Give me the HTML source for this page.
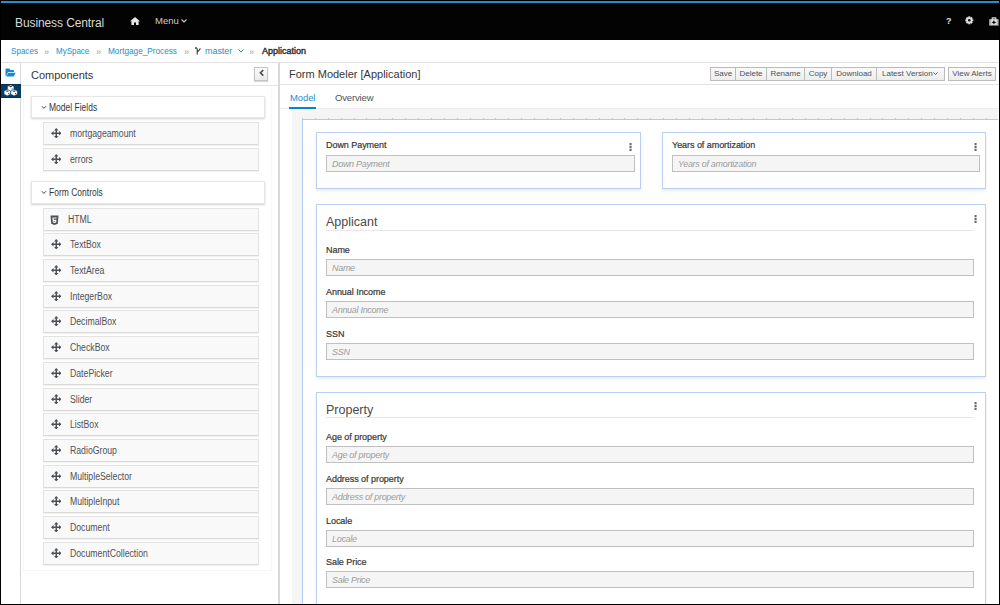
<!DOCTYPE html>
<html><head><meta charset="utf-8">
<style>
*{box-sizing:border-box;margin:0;padding:0}
html,body{width:1000px;height:605px;overflow:hidden;background:#fff}
body{position:relative;font-family:"Liberation Sans",sans-serif;color:#363636}
.a{position:absolute}
.sx{transform-origin:0 50%}
.t{position:absolute;white-space:nowrap;line-height:1}
#frame{position:absolute;left:0;top:0;width:1000px;height:605px;border:1px solid #000;z-index:100;pointer-events:none}
#nav{left:0;top:0;width:1000px;height:40px;background:#030303}
#navline{left:1px;top:1px;width:998px;height:2px;background:#2290cf}
#bc{left:0;top:40px;width:1000px;height:23px;background:#fff;border-bottom:1px solid #e2e2e2}
.lnk{color:#1f8dcd}
.raq{color:#a0a0a0;font-size:9px}
#side{left:1px;top:63px;width:20px;height:542px;border-right:1px solid #d6d6d6;background:#fff}
#divider{left:278px;top:63px;width:2px;height:542px;background:#d9d9d9}
.hdrline{height:1px;background:#e3e3e3}
.grp{background:#fff;border:1px solid #e6e6e6;box-shadow:0 1px 2px rgba(0,0,0,.18)}
.item{left:43px;width:216px;height:23px;background:#f9f9f9;border:1px solid #e3e3e3;border-bottom-color:#d9d9d9;box-shadow:0 1px 1px rgba(0,0,0,.05)}
.item .ic{position:absolute;left:7px;top:5px}
.item .lb{position:absolute;left:26px;top:6px;font-size:10px;color:#4d5258;white-space:nowrap;line-height:1;transform:scaleX(0.87);transform-origin:0 50%}
.btn{top:67px;height:14px;border:1px solid #bbb;background:linear-gradient(#fafafa,#ededed);font-size:8px;color:#4d5258;line-height:12px;text-align:center;white-space:nowrap}
.card{background:#fff;border:1px solid #b9d0f4;box-shadow:0 2px 3px rgba(0,0,0,.08)}
.flab{font-size:9px;font-weight:normal;color:#363636;-webkit-text-stroke:0.2px #363636;letter-spacing:-0.05px}
.inp{height:17px;background:#f5f5f5;border:1px solid #c0c0c0}
.ph{position:absolute;left:5px;top:4px;font-size:9px;font-style:italic;color:#9c9c9c;white-space:nowrap;line-height:1;letter-spacing:-0.3px}
.kebab{width:3px;height:8px}
.legend{font-size:12.5px;color:#4a4a4a}
.lline{height:1px;background:#e6e6e6}
</style></head><body>

<!-- NAVBAR -->
<div id="nav" class="a"></div>
<div id="navline" class="a"></div>
<div class="t" style="left:15px;top:17px;font-size:12px;color:#d8d8d8;letter-spacing:-0.1px">Business Central</div>
<svg class="a" style="left:130px;top:17px" width="10" height="8" viewBox="0 0 10 8"><path d="M5 0 L10 4.3 L8.6 4.3 L8.6 8 L6 8 L6 5.5 L4 5.5 L4 8 L1.4 8 L1.4 4.3 L0 4.3 Z" fill="#e6e6e6"/></svg>
<div class="t" style="left:155px;top:16px;font-size:9.5px;color:#cccccc">Menu</div>
<svg class="a" style="left:181px;top:19px" width="6" height="4" viewBox="0 0 6 4"><path d="M0.5 0.5 L3 3 L5.5 0.5" stroke="#c8c8c8" stroke-width="1.1" fill="none"/></svg>
<div class="t" style="left:946px;top:17px;font-size:9px;font-weight:bold;color:#e0e0e0">?</div>
<svg class="a" style="left:965.3px;top:16.3px" width="8.6" height="8.6" viewBox="0 0 9 9"><g fill="#dedede"><circle cx="4.5" cy="4.5" r="3.25"/><rect x="3.5" y="0.3" width="2" height="8.4" transform="rotate(0 4.5 4.5)"/><rect x="3.5" y="0.3" width="2" height="8.4" transform="rotate(45 4.5 4.5)"/><rect x="3.5" y="0.3" width="2" height="8.4" transform="rotate(90 4.5 4.5)"/><rect x="3.5" y="0.3" width="2" height="8.4" transform="rotate(135 4.5 4.5)"/></g><circle cx="4.5" cy="4.5" r="1.25" fill="#030303"/></svg>
<svg class="a" style="left:988.5px;top:16.6px" width="11" height="9" viewBox="0 0 11 9"><path d="M2.6 2.2 L2.6 0.6 Q2.6 0.2 3 0.2 L7 0.2 Q7.4 0.2 7.4 0.6 L7.4 2.2 L9.5 2.2 L9.5 8.5 L0.3 8.5 L0.3 2.2 Z" fill="#d8d8d8"/><rect x="3.8" y="1.1" width="2.4" height="1.1" fill="#7a7a7a"/><rect x="1.3" y="2.2" width="0.6" height="6.3" fill="#9a9a9a"/><rect x="8" y="2.2" width="0.6" height="6.3" fill="#9a9a9a"/><path d="M4.9 3.3 L5.7 4.8 L7.4 5.4 L5.7 6 L4.9 7.5 L4.1 6 L2.4 5.4 L4.1 4.8 Z" fill="#030303"/></svg>

<!-- BREADCRUMB -->
<div id="bc" class="a"></div>
<div class="t lnk sx" style="left:11px;top:46px;font-size:9.5px;transform:scaleX(0.85)">Spaces</div>
<div class="t raq" style="left:44px;top:47.5px">&raquo;</div>
<div class="t lnk sx" style="left:56px;top:46px;font-size:9.5px;transform:scaleX(0.84)">MySpace</div>
<div class="t raq" style="left:96px;top:47.5px">&raquo;</div>
<div class="t lnk sx" style="left:108px;top:46px;font-size:9.5px;transform:scaleX(0.865)">Mortgage_Process</div>
<div class="t raq" style="left:184px;top:47.5px">&raquo;</div>
<svg class="a" style="left:195px;top:47px" width="7" height="8" viewBox="0 0 7 8"><path d="M2.2 1.2 L2.2 7.6 M2.2 5.6 C2.2 3.6 5.2 3.8 5.2 1.2" stroke="#3a3a3a" stroke-width="1.1" fill="none"/><circle cx="1" cy="1" r="0.9" fill="#3a3a3a"/></svg>
<div class="t lnk sx" style="left:205px;top:46px;font-size:9.5px;transform:scaleX(0.94)">master</div>
<svg class="a" style="left:238px;top:49px" width="6" height="4" viewBox="0 0 6 4"><path d="M0.5 0.5 L3 3 L5.5 0.5" stroke="#1f8dcd" stroke-width="1" fill="none"/></svg>
<div class="t raq" style="left:249px;top:47.5px">&raquo;</div>
<div class="t sx" style="left:262px;top:46px;font-size:9.5px;color:#2a2a2a;-webkit-text-stroke:0.4px #2a2a2a;transform:scaleX(0.945)">Application</div>

<!-- SIDEBAR -->
<div id="side" class="a"></div>
<svg class="a" style="left:5px;top:68px" width="11" height="9" viewBox="0 0 11 9"><path d="M0.5 1.2 Q0.5 0.6 1.1 0.6 L4.4 0.6 L5.4 1.9 L8.3 1.9 Q8.9 1.9 8.9 2.5 L8.9 4.1 L3.1 4.1 L1.1 7.9 L0.5 7.9 Z" fill="#1589d2"/><path d="M3.4 4.8 L10.7 4.8 L8.6 8.4 L1.2 8.4 Z" fill="#1589d2"/></svg>
<div class="a" style="left:1px;top:84px;width:20px;height:14px;background:#083d63;border-top:1px solid #05304e;border-bottom:1px solid #05304e"></div>
<svg class="a" style="left:4.3px;top:85.2px" width="13.5" height="11" viewBox="0 0 13.5 11"><g transform="translate(3.4 0)"><path d="M0.1 1.5 L3.3 0 L6.5 1.5 L6.5 4.7 L3.3 6.2 L0.1 4.7 Z" fill="#fff" stroke="#083d63" stroke-width="0.45"/><ellipse cx="3.3" cy="1.6" rx="1.5" ry="0.55" fill="#083d63"/><rect x="4.2" y="3.5" width="1.1" height="1" fill="#083d63"/></g><g transform="translate(0 4.5)"><path d="M0.1 1.5 L3.3 0 L6.5 1.5 L6.5 4.7 L3.3 6.2 L0.1 4.7 Z" fill="#fff" stroke="#083d63" stroke-width="0.45"/><ellipse cx="3.3" cy="1.6" rx="1.5" ry="0.55" fill="#083d63"/><rect x="4.2" y="3.5" width="1.1" height="1" fill="#083d63"/></g><g transform="translate(6.8 4.5)"><path d="M0.1 1.5 L3.3 0 L6.5 1.5 L6.5 4.7 L3.3 6.2 L0.1 4.7 Z" fill="#fff" stroke="#083d63" stroke-width="0.45"/><ellipse cx="3.3" cy="1.6" rx="1.5" ry="0.55" fill="#083d63"/><rect x="4.2" y="3.5" width="1.1" height="1" fill="#083d63"/></g></svg>

<!-- COMPONENTS PANEL -->
<div class="t" style="left:31px;top:70px;font-size:11px;color:#363636">Components</div>
<div class="a" style="left:254px;top:67px;width:14px;height:14px;border:1px solid #c4c4c4;background:linear-gradient(#fafafa,#ececec);box-shadow:0 1px 1px rgba(0,0,0,.15)"></div>
<svg class="a" style="left:259px;top:69px" width="6" height="8" viewBox="0 0 6 8"><path d="M4.3 1 L1.4 3.8 L4.3 6.6" stroke="#42464b" stroke-width="1.5" fill="none"/></svg>
<div class="a hdrline" style="left:21px;top:85px;width:257px"></div>
<div id="divider" class="a"></div>

<!-- faint container -->
<div class="a" style="left:23px;top:89px;width:249px;height:482px;border:1px solid #f7f7f7;border-top:none"></div>

<div class="a grp" style="left:31px;top:96px;width:234px;height:22px"></div>
<svg class="a" style="left:41px;top:105px" width="6" height="5" viewBox="0 0 6 5"><path d="M0.8 1.2 L2.9 3.4 L5 1.2" stroke="#4a4a4a" stroke-width="1" fill="none"/></svg>
<div class="t sx" style="left:49px;top:103px;font-size:10px;color:#363636;transform:scaleX(0.85)">Model Fields</div>

<div class="a item" style="top:122px"><svg class="ic" style="left:6.7px;top:4.6px" width="10.5" height="10.5" viewBox="0 0 10 10"><g fill="#4a4f55"><path d="M5 0 L7.1 2.4 L2.9 2.4 Z M5 10 L7.1 7.6 L2.9 7.6 Z M0 5 L2.4 2.9 L2.4 7.1 Z M10 5 L7.6 2.9 L7.6 7.1 Z"/><rect x="4.3" y="2" width="1.4" height="6"/><rect x="2" y="4.3" width="6" height="1.4"/></g></svg><span class="lb">mortgageamount</span></div>
<div class="a item" style="top:148px"><svg class="ic" style="left:6.7px;top:4.6px" width="10.5" height="10.5" viewBox="0 0 10 10"><g fill="#4a4f55"><path d="M5 0 L7.1 2.4 L2.9 2.4 Z M5 10 L7.1 7.6 L2.9 7.6 Z M0 5 L2.4 2.9 L2.4 7.1 Z M10 5 L7.6 2.9 L7.6 7.1 Z"/><rect x="4.3" y="2" width="1.4" height="6"/><rect x="2" y="4.3" width="6" height="1.4"/></g></svg><span class="lb">errors</span></div>

<div class="a grp" style="left:31px;top:181px;width:234px;height:23px"></div>
<svg class="a" style="left:41px;top:190px" width="6" height="5" viewBox="0 0 6 5"><path d="M0.8 1.2 L2.9 3.4 L5 1.2" stroke="#4a4a4a" stroke-width="1" fill="none"/></svg>
<div class="t sx" style="left:49px;top:188px;font-size:10px;color:#363636;transform:scaleX(0.85)">Form Controls</div>

<div class="a item" style="top:208px"><svg class="ic" style="left:5.3px;top:6px" width="11" height="11" viewBox="0 0 11 11"><path d="M1.5 0.5 L9.5 0.5 L8.8 8.8 L5.5 10 L2.2 8.8 Z" fill="#4d5258"/><path d="M3.4 2.4 L7.6 2.4 L7.5 3.5 L4.6 3.5 L4.7 4.8 L7.4 4.8 L7.2 7.4 L5.5 8 L3.8 7.4 L3.7 6.2 L4.8 6.2 L4.9 6.6 L5.5 6.8 L6.1 6.6 L6.2 5.9 L3.6 5.9 Z" fill="#f8f8f8"/></svg><span class="lb" style="left:24px">HTML</span></div>
<div class="a item" style="top:233px"><svg class="ic" style="left:6.7px;top:4.6px" width="10.5" height="10.5" viewBox="0 0 10 10"><g fill="#4a4f55"><path d="M5 0 L7.1 2.4 L2.9 2.4 Z M5 10 L7.1 7.6 L2.9 7.6 Z M0 5 L2.4 2.9 L2.4 7.1 Z M10 5 L7.6 2.9 L7.6 7.1 Z"/><rect x="4.3" y="2" width="1.4" height="6"/><rect x="2" y="4.3" width="6" height="1.4"/></g></svg><span class="lb">TextBox</span></div>
<div class="a item" style="top:259px"><svg class="ic" style="left:6.7px;top:4.6px" width="10.5" height="10.5" viewBox="0 0 10 10"><g fill="#4a4f55"><path d="M5 0 L7.1 2.4 L2.9 2.4 Z M5 10 L7.1 7.6 L2.9 7.6 Z M0 5 L2.4 2.9 L2.4 7.1 Z M10 5 L7.6 2.9 L7.6 7.1 Z"/><rect x="4.3" y="2" width="1.4" height="6"/><rect x="2" y="4.3" width="6" height="1.4"/></g></svg><span class="lb">TextArea</span></div>
<div class="a item" style="top:285px"><svg class="ic" style="left:6.7px;top:4.6px" width="10.5" height="10.5" viewBox="0 0 10 10"><g fill="#4a4f55"><path d="M5 0 L7.1 2.4 L2.9 2.4 Z M5 10 L7.1 7.6 L2.9 7.6 Z M0 5 L2.4 2.9 L2.4 7.1 Z M10 5 L7.6 2.9 L7.6 7.1 Z"/><rect x="4.3" y="2" width="1.4" height="6"/><rect x="2" y="4.3" width="6" height="1.4"/></g></svg><span class="lb">IntegerBox</span></div>
<div class="a item" style="top:310px"><svg class="ic" style="left:6.7px;top:4.6px" width="10.5" height="10.5" viewBox="0 0 10 10"><g fill="#4a4f55"><path d="M5 0 L7.1 2.4 L2.9 2.4 Z M5 10 L7.1 7.6 L2.9 7.6 Z M0 5 L2.4 2.9 L2.4 7.1 Z M10 5 L7.6 2.9 L7.6 7.1 Z"/><rect x="4.3" y="2" width="1.4" height="6"/><rect x="2" y="4.3" width="6" height="1.4"/></g></svg><span class="lb">DecimalBox</span></div>
<div class="a item" style="top:336px"><svg class="ic" style="left:6.7px;top:4.6px" width="10.5" height="10.5" viewBox="0 0 10 10"><g fill="#4a4f55"><path d="M5 0 L7.1 2.4 L2.9 2.4 Z M5 10 L7.1 7.6 L2.9 7.6 Z M0 5 L2.4 2.9 L2.4 7.1 Z M10 5 L7.6 2.9 L7.6 7.1 Z"/><rect x="4.3" y="2" width="1.4" height="6"/><rect x="2" y="4.3" width="6" height="1.4"/></g></svg><span class="lb">CheckBox</span></div>
<div class="a item" style="top:362px"><svg class="ic" style="left:6.7px;top:4.6px" width="10.5" height="10.5" viewBox="0 0 10 10"><g fill="#4a4f55"><path d="M5 0 L7.1 2.4 L2.9 2.4 Z M5 10 L7.1 7.6 L2.9 7.6 Z M0 5 L2.4 2.9 L2.4 7.1 Z M10 5 L7.6 2.9 L7.6 7.1 Z"/><rect x="4.3" y="2" width="1.4" height="6"/><rect x="2" y="4.3" width="6" height="1.4"/></g></svg><span class="lb">DatePicker</span></div>
<div class="a item" style="top:388px"><svg class="ic" style="left:6.7px;top:4.6px" width="10.5" height="10.5" viewBox="0 0 10 10"><g fill="#4a4f55"><path d="M5 0 L7.1 2.4 L2.9 2.4 Z M5 10 L7.1 7.6 L2.9 7.6 Z M0 5 L2.4 2.9 L2.4 7.1 Z M10 5 L7.6 2.9 L7.6 7.1 Z"/><rect x="4.3" y="2" width="1.4" height="6"/><rect x="2" y="4.3" width="6" height="1.4"/></g></svg><span class="lb">Slider</span></div>
<div class="a item" style="top:413px"><svg class="ic" style="left:6.7px;top:4.6px" width="10.5" height="10.5" viewBox="0 0 10 10"><g fill="#4a4f55"><path d="M5 0 L7.1 2.4 L2.9 2.4 Z M5 10 L7.1 7.6 L2.9 7.6 Z M0 5 L2.4 2.9 L2.4 7.1 Z M10 5 L7.6 2.9 L7.6 7.1 Z"/><rect x="4.3" y="2" width="1.4" height="6"/><rect x="2" y="4.3" width="6" height="1.4"/></g></svg><span class="lb">ListBox</span></div>
<div class="a item" style="top:439px"><svg class="ic" style="left:6.7px;top:4.6px" width="10.5" height="10.5" viewBox="0 0 10 10"><g fill="#4a4f55"><path d="M5 0 L7.1 2.4 L2.9 2.4 Z M5 10 L7.1 7.6 L2.9 7.6 Z M0 5 L2.4 2.9 L2.4 7.1 Z M10 5 L7.6 2.9 L7.6 7.1 Z"/><rect x="4.3" y="2" width="1.4" height="6"/><rect x="2" y="4.3" width="6" height="1.4"/></g></svg><span class="lb">RadioGroup</span></div>
<div class="a item" style="top:465px"><svg class="ic" style="left:6.7px;top:4.6px" width="10.5" height="10.5" viewBox="0 0 10 10"><g fill="#4a4f55"><path d="M5 0 L7.1 2.4 L2.9 2.4 Z M5 10 L7.1 7.6 L2.9 7.6 Z M0 5 L2.4 2.9 L2.4 7.1 Z M10 5 L7.6 2.9 L7.6 7.1 Z"/><rect x="4.3" y="2" width="1.4" height="6"/><rect x="2" y="4.3" width="6" height="1.4"/></g></svg><span class="lb">MultipleSelector</span></div>
<div class="a item" style="top:490px"><svg class="ic" style="left:6.7px;top:4.6px" width="10.5" height="10.5" viewBox="0 0 10 10"><g fill="#4a4f55"><path d="M5 0 L7.1 2.4 L2.9 2.4 Z M5 10 L7.1 7.6 L2.9 7.6 Z M0 5 L2.4 2.9 L2.4 7.1 Z M10 5 L7.6 2.9 L7.6 7.1 Z"/><rect x="4.3" y="2" width="1.4" height="6"/><rect x="2" y="4.3" width="6" height="1.4"/></g></svg><span class="lb">MultipleInput</span></div>
<div class="a item" style="top:516px"><svg class="ic" style="left:6.7px;top:4.6px" width="10.5" height="10.5" viewBox="0 0 10 10"><g fill="#4a4f55"><path d="M5 0 L7.1 2.4 L2.9 2.4 Z M5 10 L7.1 7.6 L2.9 7.6 Z M0 5 L2.4 2.9 L2.4 7.1 Z M10 5 L7.6 2.9 L7.6 7.1 Z"/><rect x="4.3" y="2" width="1.4" height="6"/><rect x="2" y="4.3" width="6" height="1.4"/></g></svg><span class="lb">Document</span></div>
<div class="a item" style="top:542px"><svg class="ic" style="left:6.7px;top:4.6px" width="10.5" height="10.5" viewBox="0 0 10 10"><g fill="#4a4f55"><path d="M5 0 L7.1 2.4 L2.9 2.4 Z M5 10 L7.1 7.6 L2.9 7.6 Z M0 5 L2.4 2.9 L2.4 7.1 Z M10 5 L7.6 2.9 L7.6 7.1 Z"/><rect x="4.3" y="2" width="1.4" height="6"/><rect x="2" y="4.3" width="6" height="1.4"/></g></svg><span class="lb">DocumentCollection</span></div>


<!-- FORM MODELER HEADER -->
<div class="t" style="left:289px;top:69px;font-size:11px;color:#363636">Form Modeler [Application]</div>
<div class="a btn" style="left:710px;width:26px">Save</div>
<div class="a btn" style="left:735px;width:32px">Delete</div>
<div class="a btn" style="left:766px;width:39px">Rename</div>
<div class="a btn" style="left:804px;width:28px">Copy</div>
<div class="a btn" style="left:831px;width:46px">Download</div>
<div class="a btn" style="left:876px;width:69px;text-align:left;padding-left:5px">Latest Version</div><svg class="a" style="left:933px;top:72px" width="5" height="3" viewBox="0 0 5 3"><path d="M0.4 0.4 L2.5 2.5 L4.6 0.4" stroke="#4d5258" stroke-width="0.9" fill="none"/></svg>
<div class="a btn" style="left:948px;width:48px">View Alerts</div>
<div class="a hdrline" style="left:280px;top:84px;width:719px"></div>

<!-- TABS -->
<div class="t" style="left:290px;top:93px;font-size:9.5px;color:#1f8dcd;letter-spacing:-0.1px">Model</div>
<div class="t" style="left:335px;top:93px;font-size:9.5px;color:#4d5258;letter-spacing:-0.15px">Overview</div>
<div class="a" style="left:280px;top:108px;width:719px;height:1px;background:#ececec"></div>
<div class="a" style="left:289px;top:107px;width:27px;height:2px;background:#0a84c8"></div>

<!-- CANVAS -->
<div class="a" style="left:292px;top:109px;width:706px;height:496px;background:#f5f5f5"></div>
<div class="a" style="left:302px;top:119px;width:696px;height:486px;background:#fff;border-top:1px solid #b0caf2;border-left:1px solid #b0caf2"></div>
<div class="a" style="left:302px;top:117.5px;width:1px;height:1.5px;background:#c4c4c4"></div><div class="a" style="left:315px;top:117.5px;width:1px;height:1.5px;background:#c4c4c4"></div><div class="a" style="left:328px;top:117.5px;width:1px;height:1.5px;background:#c4c4c4"></div><div class="a" style="left:341px;top:117.5px;width:1px;height:1.5px;background:#c4c4c4"></div><div class="a" style="left:354px;top:117.5px;width:1px;height:1.5px;background:#c4c4c4"></div><div class="a" style="left:366px;top:117.5px;width:1px;height:1.5px;background:#c4c4c4"></div><div class="a" style="left:379px;top:117.5px;width:1px;height:1.5px;background:#c4c4c4"></div><div class="a" style="left:392px;top:117.5px;width:1px;height:1.5px;background:#c4c4c4"></div><div class="a" style="left:405px;top:117.5px;width:1px;height:1.5px;background:#c4c4c4"></div><div class="a" style="left:418px;top:117.5px;width:1px;height:1.5px;background:#c4c4c4"></div><div class="a" style="left:431px;top:117.5px;width:1px;height:1.5px;background:#c4c4c4"></div><div class="a" style="left:444px;top:117.5px;width:1px;height:1.5px;background:#c4c4c4"></div><div class="a" style="left:457px;top:117.5px;width:1px;height:1.5px;background:#c4c4c4"></div><div class="a" style="left:470px;top:117.5px;width:1px;height:1.5px;background:#c4c4c4"></div><div class="a" style="left:483px;top:117.5px;width:1px;height:1.5px;background:#c4c4c4"></div><div class="a" style="left:495px;top:117.5px;width:1px;height:1.5px;background:#c4c4c4"></div><div class="a" style="left:508px;top:117.5px;width:1px;height:1.5px;background:#c4c4c4"></div><div class="a" style="left:521px;top:117.5px;width:1px;height:1.5px;background:#c4c4c4"></div><div class="a" style="left:534px;top:117.5px;width:1px;height:1.5px;background:#c4c4c4"></div><div class="a" style="left:547px;top:117.5px;width:1px;height:1.5px;background:#c4c4c4"></div><div class="a" style="left:560px;top:117.5px;width:1px;height:1.5px;background:#c4c4c4"></div><div class="a" style="left:573px;top:117.5px;width:1px;height:1.5px;background:#c4c4c4"></div><div class="a" style="left:586px;top:117.5px;width:1px;height:1.5px;background:#c4c4c4"></div><div class="a" style="left:599px;top:117.5px;width:1px;height:1.5px;background:#c4c4c4"></div><div class="a" style="left:612px;top:117.5px;width:1px;height:1.5px;background:#c4c4c4"></div><div class="a" style="left:624px;top:117.5px;width:1px;height:1.5px;background:#c4c4c4"></div><div class="a" style="left:637px;top:117.5px;width:1px;height:1.5px;background:#c4c4c4"></div><div class="a" style="left:650px;top:117.5px;width:1px;height:1.5px;background:#c4c4c4"></div><div class="a" style="left:663px;top:117.5px;width:1px;height:1.5px;background:#c4c4c4"></div><div class="a" style="left:676px;top:117.5px;width:1px;height:1.5px;background:#c4c4c4"></div><div class="a" style="left:689px;top:117.5px;width:1px;height:1.5px;background:#c4c4c4"></div><div class="a" style="left:702px;top:117.5px;width:1px;height:1.5px;background:#c4c4c4"></div><div class="a" style="left:715px;top:117.5px;width:1px;height:1.5px;background:#c4c4c4"></div><div class="a" style="left:728px;top:117.5px;width:1px;height:1.5px;background:#c4c4c4"></div><div class="a" style="left:741px;top:117.5px;width:1px;height:1.5px;background:#c4c4c4"></div><div class="a" style="left:753px;top:117.5px;width:1px;height:1.5px;background:#c4c4c4"></div><div class="a" style="left:766px;top:117.5px;width:1px;height:1.5px;background:#c4c4c4"></div><div class="a" style="left:779px;top:117.5px;width:1px;height:1.5px;background:#c4c4c4"></div><div class="a" style="left:792px;top:117.5px;width:1px;height:1.5px;background:#c4c4c4"></div><div class="a" style="left:805px;top:117.5px;width:1px;height:1.5px;background:#c4c4c4"></div><div class="a" style="left:818px;top:117.5px;width:1px;height:1.5px;background:#c4c4c4"></div><div class="a" style="left:831px;top:117.5px;width:1px;height:1.5px;background:#c4c4c4"></div><div class="a" style="left:844px;top:117.5px;width:1px;height:1.5px;background:#c4c4c4"></div><div class="a" style="left:857px;top:117.5px;width:1px;height:1.5px;background:#c4c4c4"></div><div class="a" style="left:870px;top:117.5px;width:1px;height:1.5px;background:#c4c4c4"></div><div class="a" style="left:882px;top:117.5px;width:1px;height:1.5px;background:#c4c4c4"></div><div class="a" style="left:895px;top:117.5px;width:1px;height:1.5px;background:#c4c4c4"></div><div class="a" style="left:908px;top:117.5px;width:1px;height:1.5px;background:#c4c4c4"></div><div class="a" style="left:921px;top:117.5px;width:1px;height:1.5px;background:#c4c4c4"></div><div class="a" style="left:934px;top:117.5px;width:1px;height:1.5px;background:#c4c4c4"></div><div class="a" style="left:947px;top:117.5px;width:1px;height:1.5px;background:#c4c4c4"></div><div class="a" style="left:960px;top:117.5px;width:1px;height:1.5px;background:#c4c4c4"></div><div class="a" style="left:973px;top:117.5px;width:1px;height:1.5px;background:#c4c4c4"></div><div class="a" style="left:986px;top:117.5px;width:1px;height:1.5px;background:#c4c4c4"></div>

<!-- Down Payment card -->
<div class="a card" style="left:316px;top:132px;width:325px;height:57px"></div>
<div class="t flab" style="left:326px;top:141px">Down Payment</div>
<div class="a inp" style="left:326px;top:155px;width:309px"><span class="ph">Down Payment</span></div>

<!-- Years card -->
<div class="a card" style="left:662px;top:132px;width:324px;height:57px"></div>
<div class="t flab" style="left:672px;top:141px">Years of amortization</div>
<div class="a inp" style="left:672px;top:155px;width:308px"><span class="ph">Years of amortization</span></div>

<!-- Applicant card -->
<div class="a card" style="left:316px;top:204px;width:670px;height:173px"></div>
<div class="t legend" style="left:326px;top:216px">Applicant</div>
<div class="a lline" style="left:326px;top:230px;width:648px"></div>
<div class="t flab" style="left:326px;top:246px">Name</div>
<div class="a inp" style="left:326px;top:259px;width:648px"><span class="ph">Name</span></div>
<div class="t flab" style="left:326px;top:288px">Annual Income</div>
<div class="a inp" style="left:326px;top:301px;width:648px"><span class="ph">Annual Income</span></div>
<div class="t flab" style="left:326px;top:330px">SSN</div>
<div class="a inp" style="left:326px;top:343px;width:648px"><span class="ph">SSN</span></div>

<!-- Property card -->
<div class="a card" style="left:316px;top:392px;width:670px;height:230px"></div>
<div class="t legend" style="left:326px;top:404px">Property</div>
<div class="a lline" style="left:326px;top:417px;width:648px"></div>
<div class="t flab" style="left:326px;top:433px">Age of property</div>
<div class="a inp" style="left:326px;top:446px;width:648px"><span class="ph">Age of property</span></div>
<div class="t flab" style="left:326px;top:475px">Address of property</div>
<div class="a inp" style="left:326px;top:488px;width:648px"><span class="ph">Address of property</span></div>
<div class="t flab" style="left:326px;top:517px">Locale</div>
<div class="a inp" style="left:326px;top:530px;width:648px"><span class="ph">Locale</span></div>
<div class="t flab" style="left:326px;top:558px">Sale Price</div>
<div class="a inp" style="left:326px;top:571px;width:648px"><span class="ph">Sale Price</span></div>

<svg class="a kebab" style="left:629px;top:143px" width="3" height="8" viewBox="0 0 3 8"><rect x="0.5" y="0" width="2.1" height="2.2" fill="#6a6a6a"/><rect x="0.5" y="2.9" width="2.1" height="2.2" fill="#6a6a6a"/><rect x="0.5" y="5.8" width="2.1" height="2.2" fill="#6a6a6a"/></svg><svg class="a kebab" style="left:974px;top:143px" width="3" height="8" viewBox="0 0 3 8"><rect x="0.5" y="0" width="2.1" height="2.2" fill="#6a6a6a"/><rect x="0.5" y="2.9" width="2.1" height="2.2" fill="#6a6a6a"/><rect x="0.5" y="5.8" width="2.1" height="2.2" fill="#6a6a6a"/></svg><svg class="a kebab" style="left:974px;top:215px" width="3" height="8" viewBox="0 0 3 8"><rect x="0.5" y="0" width="2.1" height="2.2" fill="#6a6a6a"/><rect x="0.5" y="2.9" width="2.1" height="2.2" fill="#6a6a6a"/><rect x="0.5" y="5.8" width="2.1" height="2.2" fill="#6a6a6a"/></svg><svg class="a kebab" style="left:974px;top:402px" width="3" height="8" viewBox="0 0 3 8"><rect x="0.5" y="0" width="2.1" height="2.2" fill="#6a6a6a"/><rect x="0.5" y="2.9" width="2.1" height="2.2" fill="#6a6a6a"/><rect x="0.5" y="5.8" width="2.1" height="2.2" fill="#6a6a6a"/></svg>
<div id="frame"></div>
</body></html>
